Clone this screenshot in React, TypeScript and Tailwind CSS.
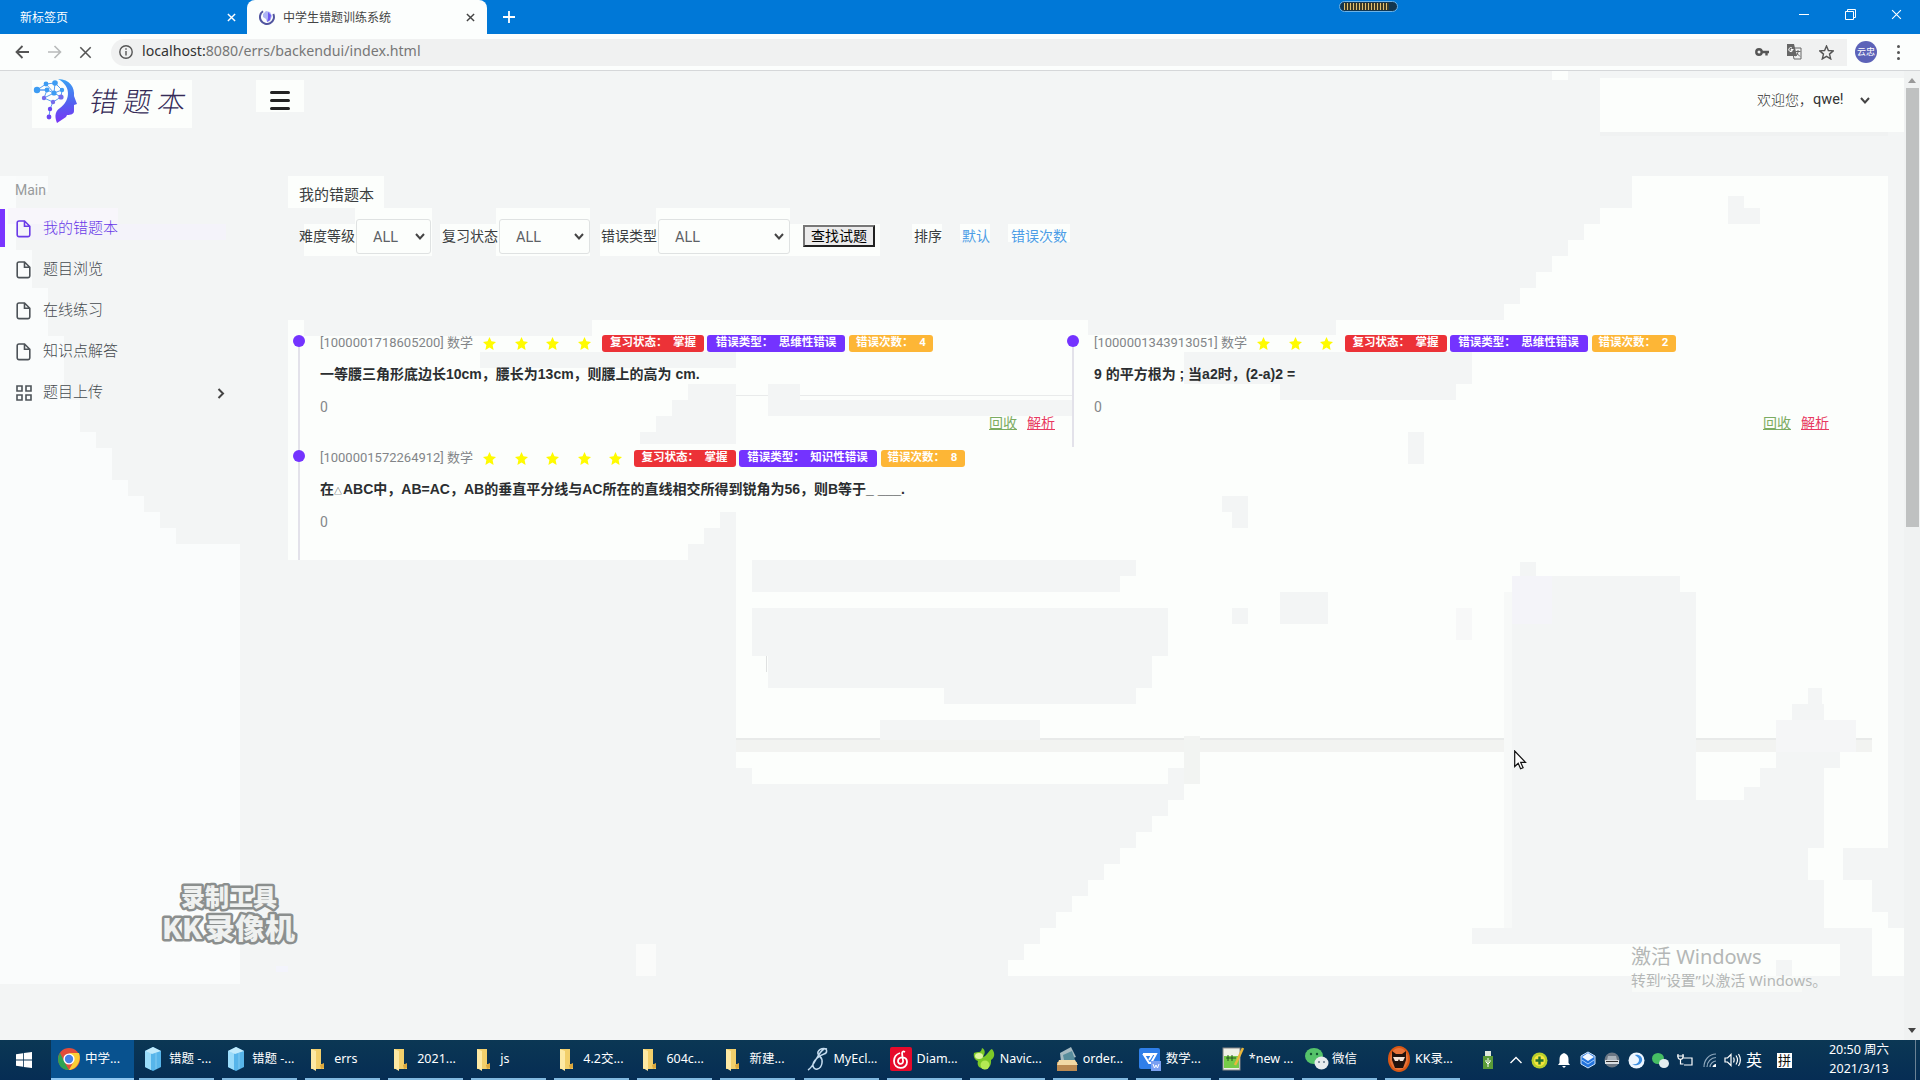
import React from "react";

const UI = "font-['Noto_Sans','Noto_Sans_CJK_SC',sans-serif]";
const WEB = "font-['Roboto','Noto_Sans_CJK_SC',sans-serif]";

const WHITE = "#fcfefc";
const GRAY = "#f3f5f5";

/* Soft light and gray patches behind the page: x, y, width, height, colour */
const patches: [number, number, number, number, string][] = [
  [32, 80, 160, 48, WHITE], [256, 80, 48, 32, WHITE], [1552, 64, 16, 16, WHITE],
  [1600, 78, 304, 54, WHITE], [1600, 132, 288, 4, "#f0f2f2"],
  [16, 176, 32, 16, "#f9fbfb"], [8, 208, 110, 16, "#f8f6fb"], [16, 224, 210, 16, "#f4f3fa"],
  [288, 176, 96, 32, WHITE], [368, 208, 16, 12, WHITE],
  [304, 224, 52, 32, WHITE], [355, 208, 77, 48, WHITE], [440, 224, 58, 16, WHITE], [496, 208, 94, 48, WHITE],
  [600, 224, 56, 32, WHITE], [656, 208, 134, 48, WHITE], [790, 224, 90, 32, WHITE],
  [912, 224, 30, 16, WHITE], [960, 224, 30, 16, WHITE], [1008, 224, 62, 18, WHITE],
  [288, 320, 16, 240, WHITE], [304, 336, 176, 224, WHITE], [480, 368, 256, 16, WHITE], [480, 336, 112, 16, WHITE],
  [592, 320, 344, 32, WHITE], [480, 384, 208, 60, WHITE], [656, 444, 80, 68, WHITE], [480, 444, 176, 86, WHITE],
  [480, 528, 224, 16, WHITE], [480, 544, 208, 16, WHITE], [656, 512, 64, 16, WHITE],
];

const overlays: [number, number, number, number, string][] = [
  [1060, 310, 444, 10, GRAY], [1088, 320, 248, 15, GRAY], [1184, 352, 288, 32, GRAY], [1280, 384, 176, 16, GRAY],
  [736, 395, 336, 1, "#e9ebeb"], [768, 384, 32, 16, GRAY], [768, 400, 304, 16, GRAY], [688, 384, 48, 16, GRAY],
  [672, 400, 64, 16, GRAY], [656, 416, 80, 16, GRAY], [640, 432, 96, 12, GRAY],
  [1728, 208, 32, 16, GRAY], [1728, 196, 16, 12, GRAY],
  [1408, 432, 16, 32, GRAY], [1222, 496, 10, 16, GRAY], [1232, 496, 16, 32, GRAY],
  [1232, 608, 16, 16, GRAY], [1280, 592, 48, 32, GRAY], [1456, 608, 16, 32, "#f7f8f8"],
  [752, 560, 384, 16, GRAY], [752, 576, 368, 16, GRAY], [752, 608, 416, 48, GRAY],
  [768, 656, 384, 32, GRAY], [944, 688, 192, 16, GRAY], [880, 720, 160, 20, GRAY],
  [736, 738, 144, 2, "#e8eae9"], [1040, 738, 480, 2, "#e8eae9"], [736, 740, 784, 12, "#f2f3f1"],
  [1696, 738, 176, 2, "#e8eae9"], [1696, 740, 176, 12, "#f2f3f1"],
  [736, 768, 16, 16, GRAY], [1168, 768, 16, 16, GRAY], [1184, 736, 16, 48, "#f2f4f2"],
  [766, 656, 1, 16, "#dfe1e1"], [1520, 562, 16, 14, GRAY],
  [1504, 592, 8, 336, "#f7f9f8"], [1512, 576, 168, 352, "#f3f5f5"], [1680, 592, 16, 336, "#f3f5f5"],
  [1512, 576, 40, 48, "#f4f4f9"], [1808, 688, 14, 16, GRAY], [1792, 704, 32, 16, GRAY],
  [1776, 720, 80, 32, "#f5f6f7"], [1776, 752, 64, 16, GRAY], [1760, 768, 64, 20, GRAY], [1744, 787, 80, 13, GRAY],
  [1696, 800, 128, 48, GRAY], [1696, 848, 112, 32, GRAY], [1696, 880, 128, 48, GRAY],
  [1472, 928, 400, 16, GRAY], [1840, 944, 32, 32, GRAY], [1843, 848, 61, 32, GRAY], [1872, 880, 32, 32, GRAY],
  [1632, 976, 170, 16, "#f8faf8"], [1888, 928, 16, 48, WHITE], [1776, 960, 16, 16, GRAY],
  [636, 944, 20, 32, "#fafbfa"], [276, 966, 12, 6, "#f3f4fc"],
];

function Haze() {
  return (
    <svg className="absolute left-0 top-0 h-full w-full" viewBox="0 71 1904 969" preserveAspectRatio="none" shapeRendering="crispEdges" aria-hidden="true">
      <polygon fill="#fafcfc" points="0,176 16,176 16,250 32,250 32,288 48,288 48,336 64,336 64,400 80,400 80,432 96,432 96,448 112,448 112,480 128,480 128,496 144,496 144,512 160,512 160,528 176,528 176,544 240,544 240,984 0,984" />
      <polygon fill={WHITE} points="1632,176 1888,176 1888,976 1008,976 1008,960 1024,960 1024,944 1040,944 1040,928 1056,928 1056,912 1072,912 1072,896 1088,896 1088,880 1104,880 1104,864 1120,864 1120,848 1136,848 1136,832 1152,832 1152,816 1168,816 1168,800 1184,800 1184,784 736,784 736,320 1504,320 1504,304 1520,304 1520,288 1536,288 1536,272 1552,272 1552,256 1568,256 1568,240 1584,240 1584,224 1600,224 1600,208 1632,208" />
      {patches.map(([x, y, w, h, c], i) => <rect key={`p${i}`} x={x} y={y} width={w} height={h} fill={c} />)}
      {overlays.map(([x, y, w, h, c], i) => <rect key={`o${i}`} x={x} y={y} width={w} height={h} fill={c} />)}
    </svg>
  );
}

function CloseX({ size = 9, color = "#fff", w = 1.6 }: { size?: number; color?: string; w?: number }) {
  return (
    <svg width={size} height={size} viewBox="0 0 10 10" stroke={color} strokeWidth={w} fill="none"><path d="M1 1l8 8M9 1L1 9" /></svg>
  );
}

function Chevron({ className = "" }: { className?: string }) {
  return (
    <svg className={className} width="10" height="7" viewBox="0 0 10 7" fill="none" stroke="#444" strokeWidth="2"><path d="M1 1l4 4.400L9 1" /></svg>
  );
}

function TabBar() {
  return (
    <div className={`flex h-[34px] bg-[#0078d7] ${UI} text-[12px]`}>
      <div className="flex w-[247px] items-center pl-5 pr-[11px] text-white">
        <span className="mt-px flex-1">新标签页</span><CloseX />
      </div>
      <div className="flex w-[240px] items-center rounded-t-lg bg-[#fcfefd] pl-3 pr-3 text-[#444]">
        <svg width="16" height="16" viewBox="0 0 16 16" fill="none">
          <path d="M4 2.200A7 7 0 1 0 14.300 5" stroke="#51559f" strokeWidth="2" />
          <path d="M4 5l3-3 4 1 2 4-2 5-3 1-1-3-3-2z" fill="#aeb5f4" /><path d="M9 3l3 3-1 5-3 2 1-4z" fill="#6d58f2" />
        </svg>
        <span className="ml-2 mt-px flex-1">中学生错题训练系统</span><CloseX color="#444" />
      </div>
      <div className="flex flex-1 items-center pl-4">
        <svg width="12" height="12" viewBox="0 0 12 12" stroke="#fff" strokeWidth="1.800"><path d="M6 0v12M0 6h12" /></svg>
        <div className="mb-[22px] ml-[824px] flex h-[11px] w-[59px] items-center rounded-full border border-[#6db3e8] bg-[#123650] px-1">
          <div className="h-[7px] w-[45px] bg-[repeating-linear-gradient(90deg,#e0c070_0_1px,#3a3a28_1px_3px)]" />
        </div>
        <div className="mb-[6px] ml-auto flex items-center pr-[18px]">
          <svg width="10" height="10" viewBox="0 0 10 10" stroke="#fff"><path d="M0 5.500h10" /></svg>
          <svg className="ml-9" width="11" height="11" viewBox="0 0 11 11" stroke="#fff" fill="none"><path d="M.5 2.500h8v8h-8zM2.500 2.500v-2h8v8h-2" /></svg>
          <span className="ml-[35px]"><CloseX size={11} w={1} /></span>
        </div>
      </div>
    </div>
  );
}

function AddressBar() {
  return (
    <div className={`flex h-[37px] items-center border-b border-[#d5d7d9] bg-[#fcfefd] ${UI}`}>
      <svg className="ml-[15px]" width="14" height="14" viewBox="0 0 14 14" fill="none" stroke="#555" strokeWidth="1.800"><path d="M14 7H1.500M7.500 1L1.500 7l6 6" /></svg>
      <svg className="ml-[19px]" width="14" height="14" viewBox="0 0 14 14" fill="none" stroke="#b8baba" strokeWidth="1.600"><path d="M0 7h12.500M6.500 1l6 6-6 6" /></svg>
      <span className="ml-[17px]"><CloseX size={13} color="#555" w={1.200} /></span>
      <div className="ml-[19px] flex h-[27px] w-[1736px] items-center rounded-l-full bg-[#f0f1f1] pl-2">
        <svg width="14" height="14" viewBox="0 0 14 14" fill="none" stroke="#555" strokeWidth="1.400"><circle cx="7" cy="7" r="6.200" /><path d="M7 6v4.500M7 3.300v1.500" /></svg>
        <span className="-mt-px ml-[9px] w-[280px] whitespace-nowrap text-[14.200px] leading-none text-[#777]"><span className="text-[#333]">localhost:</span>8080/errs/backendui/index.html</span>
        <svg className="ml-auto" width="14" height="10" viewBox="0 0 14 10" fill="none" stroke="#555" strokeWidth="2.400"><circle cx="4" cy="5" r="2.700" /><path d="M6.500 5H14M11.500 5v3.500" /></svg>
        <svg className="ml-[17px]" width="16" height="16" viewBox="0 0 16 16"><path d="M6 4h9v11H8z" fill="#f0f1f1" stroke="#666" /><path d="M1 0h7l3 12H1z" fill="#666" /><path d="M7.500 5.500H5v1.200h1.500A2 2 0 1 1 6 4" stroke="#fff" fill="none" /><path d="M9.500 7.500h5M12 6v1.500c0 2-1 3.500-2.500 4.500M11 9.500l3 3" stroke="#666" fill="none" /></svg>
        <svg className="ml-[17px] mr-[13px]" width="15" height="15" viewBox="0 0 15 15" fill="none" stroke="#555" strokeWidth="1.400"><path d="M7.500 1l1.900 4.500 4.800.4-3.700 3.200 1.200 4.800-4.200-2.600-4.200 2.600 1.200-4.800L.8 5.900l4.800-.4z" /></svg>
      </div>
      <div className="ml-[8px] flex h-[22px] w-[22px] items-center justify-center rounded-full bg-[#5c62b8] text-[9px] text-white">云忠</div>
      <div className="ml-[20px] flex flex-col gap-[3px]"><i className="h-[3px] w-[3px] rounded-full bg-[#555]" /><i className="h-[3px] w-[3px] rounded-full bg-[#555]" /><i className="h-[3px] w-[3px] rounded-full bg-[#555]" /></div>
    </div>
  );
}

function Logo() {
  const nodes: [number, number, number][] = [[4, 11, 3.2], [13, 5, 2.4], [22, 4, 2.8], [14, 11, 2.4], [21, 14, 2.6], [29, 11, 2.2], [11, 19, 2.2], [28, 18, 2.6], [20, 23, 2.2], [17, 30, 2.2], [16, 38, 2.4]];
  return (
    <svg className="mt-px" width="45" height="44" viewBox="0 0 45 44">
      <defs><linearGradient id="lg" x1="0" y1="0" x2="0" y2="1"><stop offset="0" stopColor="#3aa2f4" /><stop offset=".55" stopColor="#5360f0" /><stop offset="1" stopColor="#7a35f5" /></linearGradient></defs>
      <path d="M25 0c12 0 17 9 16 17l3 8-3 1v6c0 3-3 4-7 4l-1 2-9 6c-2-5-3-11 3-15 9-6 13-21-2-29z" fill="url(#lg)" />
      <path d="M4 11l9-6 9-1 7 7-8 3-7-3zM4 11l10 0-3 8 10-5 7 4-8 5-9-4M13 5l8 9 1-10M29 11l-1 7M20 23l-3 7-1 8" fill="none" stroke="#5a9df2" strokeWidth="1" />
      {nodes.map(([x, y, r], i) => <circle key={i} cx={x} cy={y} r={r} fill={y < 15 ? "#3d9cf3" : y < 28 ? "#756bea" : "#6b45f2"} />)}
    </svg>
  );
}

function PageHeader() {
  return (
    <header className="flex h-[58px] items-center pl-[33px] pr-[34px]">
      <Logo />
      <span className="ml-3 w-[100px] -skew-x-[10deg] whitespace-nowrap font-['Noto_Sans_CJK_SC',sans-serif] text-[28px] font-light leading-none tracking-[6px] text-[#352b57]">错题本</span>
      <div className="ml-[80px] mt-px flex w-[20px] flex-col gap-[5px]">
        <i className="h-[3px] rounded bg-[#222]" /><i className="h-[3px] rounded bg-[#222]" /><i className="h-[3px] rounded bg-[#222]" />
      </div>
      <div className="ml-auto flex items-center text-[14px] text-[#333]">
        <span className="w-[56px] font-light">欢迎您，</span><span className="w-[47px] text-[14.500px]">qwe!</span><Chevron />
      </div>
    </header>
  );
}

function FileIcon({ color }: { color: string }) {
  return <svg width="15" height="18" viewBox="0 0 15 18" fill="none" stroke={color} strokeWidth="1.600"><path d="M8.500 1H3a1.800 1.800 0 0 0-1.800 1.800v12A1.800 1.800 0 0 0 3 16.600h9a1.800 1.800 0 0 0 1.800-1.800V6.300zM8.500 1v5.300h5.300" /></svg>;
}

function Sidebar() {
  const items = ["我的错题本", "题目浏览", "在线练习", "知识点解答", "题目上传"];
  return (
    <aside className="w-[240px] pt-[50px]">
      <div className="pl-[15px] text-[14px] leading-[22px] text-[#979a9c]">Main</div>
      <nav className="mt-[6px]">
        {items.map((t, i) => (
          <div key={t} className={`flex h-[41px] items-center ${i === 0 ? "text-[#6a3be8]" : "text-[#454a4f]"}`}>
            <i className={`h-[38px] w-[5px] ${i === 0 ? "bg-[#7a35ff]" : ""}`} />
            <span className="ml-[11px] mt-[3px] w-[27px]">
              {i < 4 ? <FileIcon color={i === 0 ? "#6a3be8" : "#4d5358"} /> : (
                <svg width="16" height="16" viewBox="0 0 16 16" fill="none" stroke="#4d5358" strokeWidth="1.600"><path d="M1 1h5v5H1zM10 1h5v5h-5zM1 10h5v5H1zM10 10h5v5h-5z" /></svg>
              )}
            </span>
            <span className="mt-px w-[174px] text-[15px] font-light">{t}</span>
            {i === 4 && <svg className="mt-1" width="8" height="11" viewBox="0 0 8 11" fill="none" stroke="#444" strokeWidth="2"><path d="M1.500 1l4.500 4.500L1.500 10" /></svg>}
          </div>
        ))}
      </nav>
    </aside>
  );
}

function Select({ className }: { className: string }) {
  return <div className={`flex h-[35px] items-center justify-between rounded-[3px] border border-[#dfe2e2] bg-[#fcfefc] pl-4 pr-[5px] text-[14.500px] text-[#5c6166] ${className}`}><span className="mt-[3px]">ALL</span><Chevron /></div>;
}

type Item = { id: string; stars: number; kind: string; count: number; title: React.ReactNode; links: boolean };

function Entry({ e, tall }: { e: Item; tall: string }) {
  const badge = "flex h-[17px] items-center justify-center whitespace-pre rounded-[3px] text-[11.500px] font-bold leading-none text-white";
  return (
    <div className={`relative flex border-l-2 border-[#e3e2ea] ${tall}`}>
      <i className="absolute -left-[7px] -top-[6px] h-3 w-3 rounded-full bg-[#7433ff]" />
      <div className="w-full pl-[20px]">
        <div className="-mt-[8px] flex h-5 items-center">
          <span className="w-[163px] whitespace-nowrap text-[13px] text-[#828588]">[{e.id}] 数学</span>
          {Array.from({ length: e.stars }, (_, i) => (
            <svg key={i} className="mr-[18.500px]" width="13" height="13" viewBox="0 0 20 20" fill="#fffb00"><path d="M10 0l3 6.700 7 .8-5.200 4.900L16.300 20 10 16.200 3.700 20l1.500-7.600L0 7.500l7-.8z" /></svg>
          ))}
          <span className={`${badge} -ml-[7px] w-[102px] bg-[#ec3237]`}>复习状态：  掌握</span>
          <span className={`${badge} ml-[3px] w-[138px] bg-[#7433ff]`}>错误类型：  {e.kind}</span>
          <span className={`${badge} ml-[4px] w-[84px] bg-[#fdb636] text-[#fff3cf]`}>错误次数：  {e.count}</span>
        </div>
        <div className="mt-[11px] h-5 whitespace-nowrap font-['Liberation_Sans','Noto_Sans_CJK_SC',sans-serif] text-[14px] font-bold leading-5 text-[#2b2e30]">{e.title}</div>
        <div className="mt-[13px] h-5 text-[14px] leading-5 text-[#85888a]">0</div>
        {e.links && (
          <div className="-mt-[4px] flex justify-end gap-[10px] pr-[17px] text-[14px] leading-5">
            <a className="text-[#7cac62] underline">回收</a><a className="text-[#e83a61] underline">解析</a>
          </div>
        )}
      </div>
    </div>
  );
}

function Content() {
  return (
    <main className="w-[1648px] pl-[58px] pt-[54px] text-[14px] text-[#3a3d40]">
      <h1 className="ml-px mt-px text-[15px] font-normal leading-[22px]">我的错题本</h1>
      <div className="ml-px mt-[12px] flex h-[36px] items-center whitespace-nowrap">
        <span className="w-[57px]">难度等级</span><Select className="w-[75px]" />
        <span className="ml-[11px] w-[57px]">复习状态</span><Select className="w-[91px]" />
        <span className="ml-[11px] w-[57px]">错误类型</span><Select className="w-[132px]" />
        <button className="ml-[13px] h-[22px] w-[72px] border-2 border-b-[#222] border-l-[#777] border-r-[#222] border-t-[#777] bg-[#ececec] text-[14px] leading-none text-black">查找试题</button>
        <span className="ml-[39px] w-[48px]">排序</span>
        <a className="w-[49px] text-[#4d9de6]">默认</a><a className="text-[#4d9de6]">错误次数</a>
      </div>
      <div className="mt-[87px] flex">
        <div className="w-[774px]">
          <Entry tall="h-[115px]" e={{ id: "1000001718605200", stars: 4, kind: "思维性错误", count: 4, links: true, title: "一等腰三角形底边长10cm，腰长为13cm，则腰上的高为 cm." }} />
          <Entry tall="h-[104px]" e={{ id: "1000001572264912", stars: 5, kind: "知识性错误", count: 8, links: false, title: <>在<span className="inline-block w-[9px] text-[8px] font-normal leading-none">△</span>ABC中，AB=AC，AB的垂直平分线与AC所在的直线相交所得到锐角为56，则B等于_ ___.</> }} />
        </div>
        <div className="w-[774px]">
          <Entry tall="h-[106px]" e={{ id: "1000001343913051", stars: 3, kind: "思维性错误", count: 2, links: true, title: "9 的平方根为 ; 当a2时，(2-a)2 =" }} />
        </div>
      </div>
    </main>
  );
}

function Scrollbar() {
  return (
    <div className="relative flex w-4 flex-col items-center bg-[#f0f2f2]">
      <svg className="mt-[7px]" width="8" height="5" viewBox="0 0 8 5"><path d="M0 5l4-5 4 5z" fill="#999" /></svg>
      <div className="mt-[5px] h-[439px] w-[13px] bg-[#bfc1c1]" />
      <svg className="mb-[7px] mt-auto" width="8" height="5" viewBox="0 0 8 5"><path d="M0 0l4 5 4-5z" fill="#444" /></svg>
    </div>
  );
}

function TaskIcon({ kind }: { kind: string }) {
  return (
    <svg width="24" height="28" viewBox="0 0 24 28">
      {kind === "box" && <><path d="M3 6l8-4 8 4v16l-8 4-8-4z" fill="#57b5ea" /><path d="M3 6l6 2v17l-6-3z" fill="#9bdcfa" /><path d="M3 6l8-4 8 4-9 3z" fill="#c2ebfc" /><path d="M14 8v16" stroke="#82cbf2" /></>}
      {kind === "folder" && <><path d="M3 4h10v15l3 1v4H3z" fill="#f2cf6b" /><path d="M3 4l5 2v20l-5-3z" fill="#fde9a4" /><path d="M12 20l4-2v5l-3 1z" fill="#dca83d" /></>}
      {kind === "eclipse" && <path d="M20 4c-6-2-10 2-9 5 2 4 5 3 4 9-1 7-8 8-9 3S13 10 17 9s3-6 0-5C11 7 7 22 1 25" fill="none" stroke="#c5dcef" strokeWidth="1.500" />}
      {kind === "netease" && <><rect x="0" y="2" width="22" height="24" rx="2" fill="#e60a2b" /><path d="M15 7c-4-2-3 2-2 8 1 5-5 5-5 1 0-5 9-5 9 1 0 8-13 8-13-1 0-5 3-7 6-8" fill="none" stroke="#fff" strokeWidth="1.800" /></>}
      {kind === "navicat" && <><path d="M1 8c4-2 7 1 8-5 4 2 3 6 1 9 4-1 6-7 9-8 4 5 2 9-1 11 1 8-6 11-10 8-3-1-4-4-3-7-3-1-5-4-4-8z" fill="#7cc928" /><ellipse cx="6" cy="11" rx="4" ry="3" fill="#dff7a0" /><circle cx="12" cy="20" r="4.500" fill="#b4ea54" /></>}
      {kind === "order" && <><path d="M4 8l11-6 5 10-15 5z" fill="#a5bac1" /><path d="M7 10l9-4 3 9H8z" fill="#588d9c" /><path d="M1 17h20v9H1z" fill="#bb8a52" /><path d="M3 15h16l3 5H1z" fill="#f2d9a5" /></>}
      {kind === "wps" && <><rect x="0" y="3" width="21" height="21" rx="2" fill="#2f7fe9" /><path d="M4 9h13l-5 9h-2L5 10h8l-3 5" fill="none" stroke="#fff" strokeWidth="2" /><rect x="12" y="16" width="10" height="10" fill="#7ba0f1" /><path d="M14 19l1.500 4 1.500-3 1.500 3 1.500-4" stroke="#fff" fill="none" /></>}
      {kind === "npp" && <><rect x="1" y="3" width="17" height="22" fill="#f0f1e6" stroke="#888" /><path d="M2 11h15v12H2z" fill="#76cb47" /><path d="M6 10v6M4 13h10M10 10v6" stroke="#245721" /><path d="M21 3l-6 13-2 4" stroke="#e9b73c" strokeWidth="2.500" /></>}
      {kind === "wechat" && <><ellipse cx="9" cy="11" rx="9" ry="8" fill="#55c36a" /><circle cx="6" cy="9" r="1.200" fill="#153" /><circle cx="12" cy="9" r="1.200" fill="#153" /><ellipse cx="16.500" cy="18" rx="7" ry="6.500" fill="#e8ebec" /><circle cx="14" cy="17" r="1" fill="#678" /><circle cx="19" cy="17" r="1" fill="#678" /></>}
      {kind === "kk" && <><ellipse cx="11" cy="14" rx="11" ry="13" fill="#d95714" /><ellipse cx="11" cy="14" rx="9" ry="11" fill="#e8743a" /><path d="M4 6l4 3h6l4-3v9l-3 8H7l-3-8z" fill="#21120d" /><path d="M5 12h12l-2 4h-3l-1-2-1 2H7z" fill="#f7e5d8" /></>}
      {kind === "chrome" && <><circle cx="11" cy="14" r="11" fill="#e24c3b" /><path d="M2 8l6 12 3 5C0 25-2 14 2 8z" fill="#2fa353" /><path d="M11 8h10c3 8-3 17-10 17l5-9z" fill="#fbce35" /><circle cx="11" cy="14" r="5.600" fill="#fff" /><circle cx="11" cy="14" r="4.200" fill="#4680e8" /></>}
    </svg>
  );
}

const tasks: [string, string][] = [
  ["box", "错题 -..."], ["box", "错题 -..."], ["folder", "errs"], ["folder", "2021..."], ["folder", "js"], ["folder", "4.2交..."],
  ["folder", "604c..."], ["folder", "新建..."], ["eclipse", "MyEcl..."], ["netease", "Diam..."], ["navicat", "Navic..."],
  ["order", "order..."], ["wps", "数学..."], ["npp", "*new ..."], ["wechat", "微信"], ["kk", "KK录..."],
];

function Tray() {
  return (
    <div className="flex items-center text-white">
      <svg className="ml-[15px]" width="10" height="18" viewBox="0 0 10 18"><path d="M2 0h6v5H2z" fill="#dfe8df" /><path d="M0 5h10v13H0z" fill="#5a9b38" /><path d="M5 7v9M3 9v2l2 2 2-2V9" stroke="#fff" fill="none" /></svg>
      <svg className="ml-[17px]" width="12" height="8" viewBox="0 0 12 8" fill="none" stroke="#fff" strokeWidth="1.400"><path d="M.5 7L6 1.500 11.500 7" /></svg>
      <svg className="ml-[9px]" width="17" height="17" viewBox="0 0 17 17"><circle cx="8.500" cy="8.500" r="8" fill="#b8cf2c" /><circle cx="8.500" cy="8.500" r="5.500" fill="#f6e53c" /><path d="M8.500 4.500v8M4.500 8.500h8" stroke="#27722c" strokeWidth="2.400" /></svg>
      <svg className="ml-[10px]" width="12" height="15" viewBox="0 0 12 15" fill="#fff"><path d="M6 0c3 1 4.500 3 4.500 6v4L12 12H0l1.500-2V6C1.500 3 3 1 6 0zM4 13h4l-2 2z" /></svg>
      <svg className="ml-[10px]" width="16" height="18" viewBox="0 0 16 18"><path d="M8 1l7 4v8l-7 4-7-4V5z" fill="#2373db" stroke="#cfe6ff" /><path d="M8 2l6 4-6 4-6-4z" fill="#f0f7ff" /><path d="M2 9l6 4 6-4" stroke="#a9d0ff" fill="none" /></svg>
      <svg className="ml-[8px]" width="16" height="16" viewBox="0 0 16 16"><circle cx="8" cy="8" r="7.500" fill="#6b7784" /><path d="M1 8h14v4H1z" fill="#d8dde1" /><path d="M4 4h8l1 4H3z" fill="#a9b2ba" /><path d="M2 9.500h12" stroke="#333" /></svg>
      <svg className="ml-[8px]" width="17" height="17" viewBox="0 0 17 17"><circle cx="8.500" cy="8.500" r="8" fill="#edf6ff" /><path d="M7 3c4-1 8 2 7 6-2 5-7 5-10 3 4 1 7-1 7-4s-2-3-4-5z" fill="#3e8fe0" /></svg>
      <svg className="ml-[7px]" width="17" height="17" viewBox="0 0 17 17"><ellipse cx="6" cy="6.500" rx="6" ry="5.500" fill="#46be63" /><ellipse cx="12" cy="11.500" rx="5" ry="4.500" fill="#e5eef0" /></svg>
      <svg className="ml-[8px]" width="16" height="14" viewBox="0 0 16 14" fill="none" stroke="#fff" strokeWidth="1.200"><path d="M6 5h9v7H7M1 1v3c0 3 5 3 5 0V1M3.500 6v5h3M0 3h7" /></svg>
      <svg className="ml-[10px]" width="14" height="15" viewBox="0 0 14 15" fill="none"><path d="M1 14C1 7 6 1 13 1M4 14c0-5 4-9.500 9-9.500M7 14c0-3 3-6 6-6" stroke="#8fa8bd" strokeWidth="1.200" /><path d="M9.500 14c0-1.500 2-3 3.500-3v3z" fill="#fff" /></svg>
      <svg className="ml-[7px]" width="17" height="14" viewBox="0 0 17 14" fill="none" stroke="#fff" strokeWidth="1.200"><path d="M1 5h2.500L7 1.500v11L3.500 9H1zM9.500 4.500c1 2 1 3 0 5M12 2.500c2 3 2 6 0 9M14.500 1c2.500 4 2.500 8 0 12" /></svg>
      <span className="ml-[5px] text-[16px] leading-none">英</span>
      <span className="ml-[15px] flex h-[15px] w-[15px] items-center justify-center bg-white text-[13px] leading-none text-[#111]">拼</span>
      <div className="ml-[24px] flex w-[86px] flex-col items-center whitespace-nowrap pb-[2px] text-[12.500px] leading-[19px]"><span>20:50 周六</span><span>2021/3/13</span></div>
    </div>
  );
}

function Taskbar() {
  return (
    <footer className={`flex h-10 bg-gradient-to-b from-[#0b3754] to-[#062d54] text-[12.500px] text-white ${UI}`}>
      <div className="flex w-[51px] items-center pl-[16px]">
        <svg width="16" height="16" viewBox="0 0 16 16" fill="#fff"><path d="M0 2.200l7-1v6.400H0zM7.800 1.100L16 0v7.600H7.800zM0 8.400h7v6.400l-7-1zM7.800 8.400H16V16l-8.200-1.100z" /></svg>
      </div>
      <div className="flex w-[83px] items-center border-b-2 border-[#8fc8f2] bg-[#08528f] pl-[7px]"><TaskIcon kind="chrome" /><span className="ml-[3px] mt-px">中学...</span></div>
      <div className="ml-[5px] flex">
        {tasks.map(([k, t], i) => (
          <div key={i} className="flex w-[83.070px] pr-[8px]">
            <div className="flex w-[75px] items-center whitespace-nowrap border-b-2 border-[#82b9e0] pl-[3px]"><TaskIcon kind={k} /><span className={`mt-px ${k === "folder" ? "ml-[2px]" : "ml-[3px]"}`}>{t}</span></div>
          </div>
        ))}
      </div>
      <Tray />
      <div className="ml-auto mr-1 w-px bg-[#6a8295]" />
    </footer>
  );
}

export default function App() {
  return (
    <div className={`relative flex h-[1080px] w-[1920px] flex-col overflow-hidden ${UI}`}>
      <TabBar />
      <AddressBar />
      <div className="flex h-[969px]">
        <div className={`relative w-[1904px] bg-[#f3f5f5] ${WEB}`}>
          <Haze />
          <div className="relative">
            <PageHeader />
            <div className="flex"><Sidebar /><Content /></div>
          </div>
        </div>
        <Scrollbar />
      </div>
      <Taskbar />

      <svg className="absolute left-[153px] top-[872px]" width="150" height="82" viewBox="0 0 150 82" fontFamily="'Noto Sans CJK SC', sans-serif" fontWeight="900" fill="#eff1f0" stroke="#8b8f8e" strokeWidth="5" strokeLinejoin="round" paintOrder="stroke">
        <text x="28" y="34" fontSize="24" textLength="96" lengthAdjust="spacingAndGlyphs">录制工具</text>
        <text x="9" y="67" fontSize="28" textLength="40" lengthAdjust="spacingAndGlyphs">KK</text>
        <text x="52" y="67" fontSize="28" textLength="90" lengthAdjust="spacingAndGlyphs">录像机</text>
      </svg>
      <div className="absolute left-[1631px] top-[943px] whitespace-nowrap text-[#b4b7b6]">
        <div className="text-[20px] leading-[28px]">激活 Windows</div>
        <div className="-mt-px text-[14.800px] leading-[20px]">转到“设置”以激活 Windows。</div>
      </div>
      <svg className="absolute left-[1514px] top-[750px]" width="13" height="20" viewBox="0 0 13 20"><path d="M.7 1v15.500l3.500-3.300 2.400 5.500 2.500-1-2.400-5.300h4.800z" fill="#fff" stroke="#111" strokeWidth="1.200" /></svg>
    </div>
  );
}
